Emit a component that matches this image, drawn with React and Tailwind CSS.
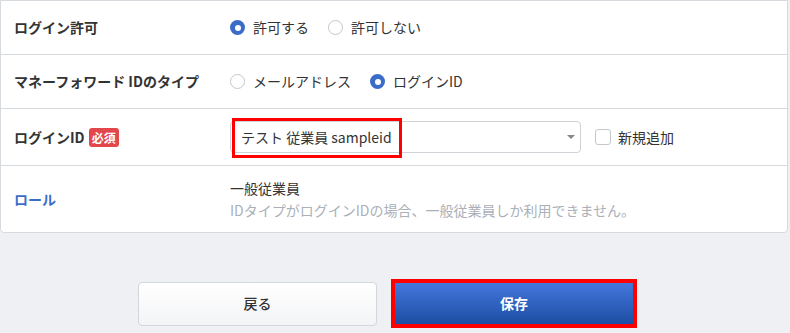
import React from "react";

const FONT = { fontFamily: '"Noto Sans CJK JP", "Noto Sans", sans-serif' };

function Radio({ checked, label }) {
  return (
    <label className="flex items-center gap-[8px]">
      {checked ? (
        <span className="w-[15px] h-[15px] rounded-full bg-[#3b6dc8] flex items-center justify-center">
          <span className="w-[6px] h-[6px] rounded-full bg-white" />
        </span>
      ) : (
        <span className="w-[15px] h-[15px] rounded-full border border-[#c4c7cc] bg-white" />
      )}
      <span className="text-[14px] text-[#333]">{label}</span>
    </label>
  );
}

export default function App() {
  return (
    <div className="w-[790px] h-[333px] bg-[#eff0f4] overflow-hidden" style={FONT}>
      <div className="w-[788px] bg-white border border-[#d6d9de] rounded-b-[4px]">
        <div className="grid grid-cols-[229px_1fr] h-[54px] border-b border-[#d6d9de] items-center">
          <div className="pl-[13px] text-[14px] font-bold text-[#333]">ログイン許可</div>
          <div className="flex items-center gap-[19px]">
            <Radio checked label="許可する" />
            <Radio label="許可しない" />
          </div>
        </div>
        <div className="grid grid-cols-[229px_1fr] h-[54px] border-b border-[#d6d9de] items-center">
          <div className="pl-[13px] text-[14px] font-bold text-[#333]">マネーフォワード IDのタイプ</div>
          <div className="flex items-center gap-[19px]">
            <Radio label="メールアドレス" />
            <Radio checked label="ログインID" />
          </div>
        </div>
        <div className="grid grid-cols-[229px_1fr] h-[57px] border-b border-[#d6d9de] items-center">
          <div className="pl-[13px] flex items-center gap-[4px]">
            <span className="text-[14px] font-bold text-[#333]">ログインID</span>
            <span className="h-[19px] px-[3px] rounded-[3px] bg-[#e2474b] text-white text-[12px] font-bold leading-[19px]">必須</span>
          </div>
          <div className="flex items-center">
            <div className="relative w-[351px] h-[32px] border border-[#cfd2d6] rounded-[4px] flex items-center pl-[10px]">
              <span className="text-[14px] text-[#333]">テスト 従業員 sampleid</span>
              <span className="absolute right-[5px] top-[13px] w-0 h-0 border-l-[4px] border-r-[4px] border-t-[4px] border-l-transparent border-r-transparent border-t-[#888]" />
              <span className="absolute left-[1px] top-[-4px] w-[170px] h-[40px] border-[3px] border-[#ff0000]" />
            </div>
            <div className="flex items-center gap-[7px] ml-[14px]">
              <span className="w-[16px] h-[16px] rounded-[3px] border border-[#c4c7cc] bg-white" />
              <span className="text-[14px] text-[#333]">新規追加</span>
            </div>
          </div>
        </div>
        <div className="grid grid-cols-[229px_1fr] h-[66px] items-center">
          <div className="pl-[13px] text-[14px] font-bold text-[#3b6dc8]">ロール</div>
          <div className="flex flex-col leading-[22px] text-[14px]">
            <span className="text-[#333]">一般従業員</span>
            <span className="text-[#aab0b7]">IDタイプがログインIDの場合、一般従業員しか利用できません。</span>
          </div>
        </div>
      </div>
      <div className="flex items-center pl-[138px] pt-[46px] gap-[14px]">
        <button className="w-[239px] h-[44px] rounded-[4px] border border-[#d3d6db] bg-gradient-to-b from-white to-[#f3f4f6] text-[14px] text-[#333] font-medium" style={FONT}>
          戻る
        </button>
        <div className="border-[4px] border-[#ff0000]">
          <button className="w-[238px] h-[41px] bg-gradient-to-b from-[#4377dd] to-[#1d4ea3] text-[14px] text-white font-bold flex items-center justify-center" style={FONT}>
            保存
          </button>
        </div>
      </div>
    </div>
  );
}
